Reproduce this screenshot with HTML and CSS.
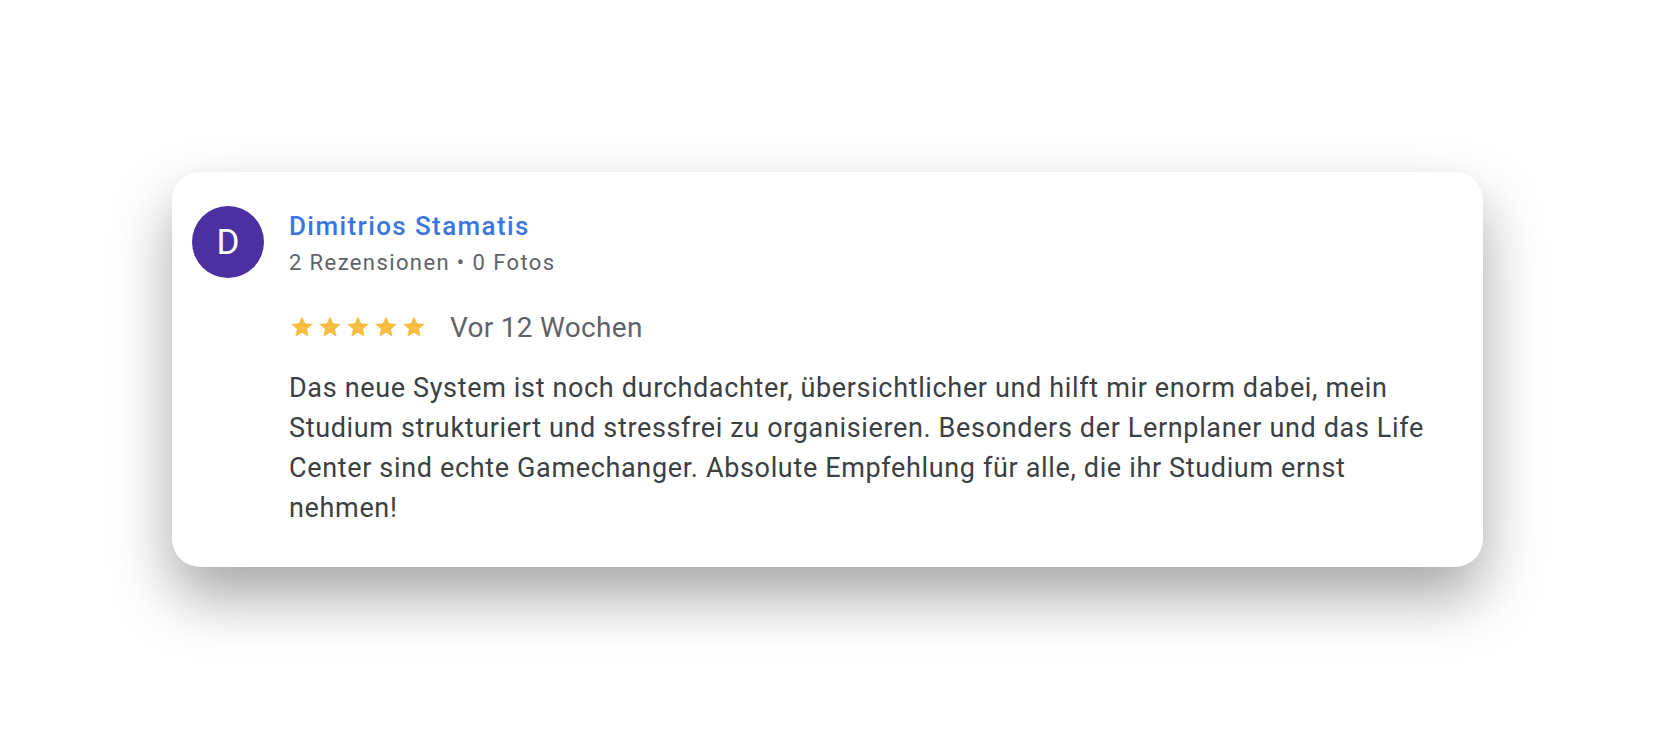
FILE: index.html
```html
<!DOCTYPE html>
<html lang="de">
<head>
<meta charset="utf-8">
<title>Rezension</title>
<link rel="stylesheet" href="styles.css">
</head>
<body>
<main class="page">
  <article class="card">
    <div class="avatar">D</div>
    <div class="content">
      <div class="name">Dimitrios Stamatis</div>
      <div class="sub">2 Rezensionen • 0 Fotos</div>
      <div class="rating">
        <div class="stars">
          <svg viewBox="0 0 24 24"><path d="M12 17.27L18.18 21l-1.64-7.03L22 9.24l-7.19-.61L12 2 9.19 8.63 2 9.24l5.46 4.73L5.82 21z"/></svg>
          <svg viewBox="0 0 24 24"><path d="M12 17.27L18.18 21l-1.64-7.03L22 9.24l-7.19-.61L12 2 9.19 8.63 2 9.24l5.46 4.73L5.82 21z"/></svg>
          <svg viewBox="0 0 24 24"><path d="M12 17.27L18.18 21l-1.64-7.03L22 9.24l-7.19-.61L12 2 9.19 8.63 2 9.24l5.46 4.73L5.82 21z"/></svg>
          <svg viewBox="0 0 24 24"><path d="M12 17.27L18.18 21l-1.64-7.03L22 9.24l-7.19-.61L12 2 9.19 8.63 2 9.24l5.46 4.73L5.82 21z"/></svg>
          <svg viewBox="0 0 24 24"><path d="M12 17.27L18.18 21l-1.64-7.03L22 9.24l-7.19-.61L12 2 9.19 8.63 2 9.24l5.46 4.73L5.82 21z"/></svg>
        </div>
        <span class="date">Vor 12 Wochen</span>
      </div>
      <p class="text">Das neue System ist noch durchdachter, übersichtlicher und hilft mir enorm dabei, mein Studium strukturiert und stressfrei zu organisieren. Besonders der Lernplaner und das Life Center sind echte Gamechanger. Absolute Empfehlung für alle, die ihr Studium ernst nehmen!</p>
    </div>
  </article>
</main>
</body>
</html>
```

FILE: styles.css
```css
* { box-sizing: border-box; }
html, body { margin: 0; padding: 0; background: #ffffff; }
body {
  font-family: Roboto, "Liberation Sans", sans-serif;
  width: 1656px;
  height: 740px;
  overflow: hidden;
}
.page {
  padding: 172px 173px 0 172px;
}
.card {
  width: 1311px;
  height: 395px;
  background: #ffffff;
  border-radius: 28px;
  box-shadow: 0 30px 60px rgba(0, 0, 0, 0.35);
  display: flex;
  gap: 25px;
  padding: 34px 36px 38px 20px;
}
.avatar {
  flex: 0 0 72px;
  width: 72px;
  height: 72px;
  border-radius: 50%;
  background: #4b30a1;
  color: #ffffff;
  font-size: 35px;
  display: flex;
  align-items: center;
  justify-content: center;
}
.content {
  flex: 1;
  display: flex;
  flex-direction: column;
}
.name {
  margin-top: 2px;
  font-size: 26px;
  font-weight: 500;
  letter-spacing: 1.4px;
  line-height: 36px;
  color: #3a76e2;
}
.sub {
  font-size: 22px;
  letter-spacing: 1.4px;
  line-height: 38px;
  color: #5f6368;
}
.rating {
  margin-top: 28px;
  height: 34px;
  display: flex;
  align-items: center;
  gap: 23px;
}
.stars {
  display: flex;
  gap: 2px;
}
.stars svg {
  width: 26px;
  height: 26px;
  fill: #f5be41;
}
.date {
  font-size: 28px;
  letter-spacing: 0.3px;
  color: #5f6368;
}
.text {
  margin: 24px 0 0;
  font-size: 27px;
  letter-spacing: 0.65px;
  line-height: 40px;
  color: #3c4043;
}
```
